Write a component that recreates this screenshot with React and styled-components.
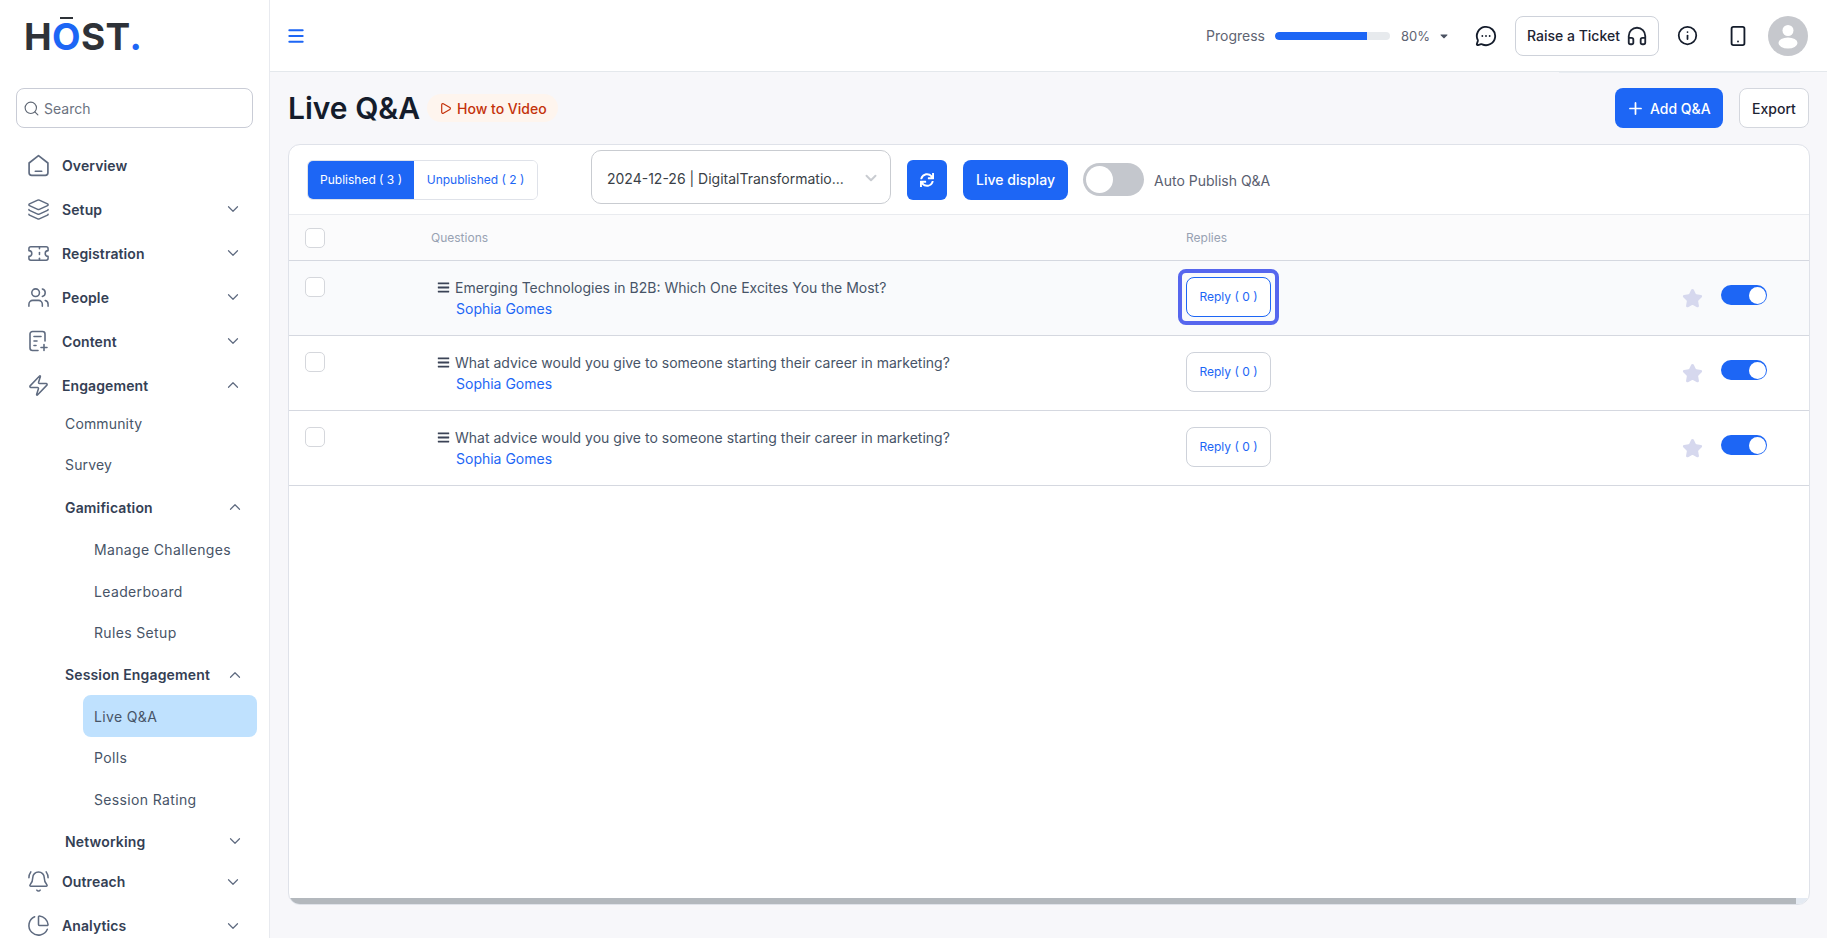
import React from "react"
import styled, { createGlobalStyle } from "styled-components"
import {
  Layers,
  Ticket,
  Users,
  Zap,
  BellRing,
  ChartPie,
  ChevronDown,
  ChevronUp,
  Search,
  Menu,
  MessageCircleMore,
  Headphones,
  Info,
  Smartphone,
  Plus,
  Play,
  Star,
} from "lucide-react"
import { FaSync, FaBars, FaCaretDown } from "react-icons/fa"

const GlobalStyle = createGlobalStyle`
  html, body {
    margin: 0;
    padding: 0;
    height: 938px;
    overflow: hidden;
    background: #f7f7fa;
    font-family: Inter, "Noto Sans", sans-serif;
  }
  * { box-sizing: border-box; }
`

const HomeIcon = () => (
  <svg width="23" height="23" viewBox="0 0 22 22" fill="none" stroke="currentColor" strokeWidth="1.6" strokeLinejoin="round" strokeLinecap="round">
    <path d="M2 8.6 11 1.5l9 7.1V18a2.5 2.5 0 0 1-2.5 2.5h-13A2.5 2.5 0 0 1 2 18V8.6Z" />
    <path d="M8 16.5h6" />
  </svg>
)

const ContentIcon = () => (
  <svg width="22" height="22" viewBox="0 0 22 22" fill="none" stroke="currentColor" strokeWidth="1.6" strokeLinecap="round" strokeLinejoin="round">
    <path d="M18 11V4a2.5 2.5 0 0 0-2.5-2.5h-10A2.5 2.5 0 0 0 3 4v14a2.5 2.5 0 0 0 2.5 2.5H11" />
    <path d="M7 6.5h7M7 11h3M7 15.5h2M17 14.5v6M14 17.5h6" />
  </svg>
)

const AvatarIcon = () => (
  <svg width="40" height="40" viewBox="0 0 40 40">
    <circle cx="20" cy="20" r="20" fill="#c6c8cd" />
    <circle cx="20" cy="14.5" r="5.5" fill="#fff" />
    <ellipse cx="20" cy="27" rx="9.5" ry="5.5" fill="#fff" />
  </svg>
)

const topItems = [
  { label: "Overview", icon: <HomeIcon /> },
  { label: "Setup", icon: <Layers size={23} strokeWidth={1.6} />, arrow: "down" },
  { label: "Registration", icon: <Ticket size={23} strokeWidth={1.6} />, arrow: "down" },
  { label: "People", icon: <Users size={23} strokeWidth={1.6} />, arrow: "down" },
  { label: "Content", icon: <ContentIcon />, arrow: "down" },
  { label: "Engagement", icon: <Zap size={23} strokeWidth={1.6} />, arrow: "up" },
]

const subItems = [
  { label: "Community", level: 1, height: 40 },
  { label: "Survey", level: 1, height: 42 },
  { label: "Gamification", level: 1, bold: true, arrow: "up", height: 43.1 },
  { label: "Manage Challenges", level: 2 },
  { label: "Leaderboard", level: 2 },
  { label: "Rules Setup", level: 2 },
  { label: "Session Engagement", level: 1, bold: true, arrow: "up" },
  { label: "Live Q&A", level: 2, active: true },
  { label: "Polls", level: 2 },
  { label: "Session Rating", level: 2 },
  { label: "Networking", level: 1, bold: true, arrow: "down" },
]

const bottomItems = [
  { label: "Outreach", icon: <BellRing size={23} strokeWidth={1.6} />, arrow: "down" },
  { label: "Analytics", icon: <ChartPie size={23} strokeWidth={1.6} />, arrow: "down" },
]

const questions = [
  { text: "Emerging Technologies in B2B: Which One Excites You the Most?", focused: true },
  { text: "What advice would you give to someone starting their career in marketing?" },
  { text: "What advice would you give to someone starting their career in marketing?" },
]

function Arrow({ dir }) {
  const Icon = dir === "up" ? ChevronUp : ChevronDown
  return (
    <ArrowSlot>
      <Icon size={18} strokeWidth={1.6} />
    </ArrowSlot>
  )
}

export default function App() {
  return (
    <>
      <GlobalStyle />
      <Page>
        <Sidebar>
          <Logo>
            H<LogoO>O</LogoO>ST<LogoDot>.</LogoDot>
          </Logo>
          <SearchBox>
            <Search size={17} strokeWidth={1.6} color="#5f6774" />
            <span>Search</span>
          </SearchBox>
          <Nav>
            {topItems.map((item) => (
              <TopItem key={item.label}>
                <IconSlot>{item.icon}</IconSlot>
                <TopLabel>{item.label}</TopLabel>
                {item.arrow && <Arrow dir={item.arrow} />}
              </TopItem>
            ))}
            <SubGroup>
              {subItems.map((item) => (
                <SubItem
                  key={item.label}
                  $level={item.level}
                  $bold={item.bold}
                  $active={item.active}
                  $height={item.height}
                >
                  <span>{item.label}</span>
                  {item.arrow && <Arrow dir={item.arrow} />}
                </SubItem>
              ))}
            </SubGroup>
            <BottomGroup>
              {bottomItems.map((item) => (
                <TopItem key={item.label}>
                  <IconSlot>{item.icon}</IconSlot>
                  <TopLabel>{item.label}</TopLabel>
                  <Arrow dir={item.arrow} />
                </TopItem>
              ))}
            </BottomGroup>
          </Nav>
        </Sidebar>

        <Main>
          <TopBar>
            <Menu size={20} strokeWidth={2.4} color="#1d66f5" />
            <TopRight>
              <ProgressLabel>Progress</ProgressLabel>
              <ProgressTrack>
                <ProgressFill style={{ width: "80%" }} />
              </ProgressTrack>
              <ProgressValue>80%</ProgressValue>
              <CaretSlot>
                <FaCaretDown size={12} />
              </CaretSlot>
              <MessageSlot>
                <MessageCircleMore size={22} strokeWidth={2} />
              </MessageSlot>
              <TicketButton>
                Raise a Ticket
                <Headphones size={22} strokeWidth={2} />
              </TicketButton>
              <InfoSlot>
                <Info size={21} strokeWidth={2} />
              </InfoSlot>
              <PhoneSlot>
                <Smartphone size={22} strokeWidth={2} />
              </PhoneSlot>
              <AvatarIcon />
            </TopRight>
          </TopBar>

          <Content>
            <Header>
              <Title>Live Q&amp;A</Title>
              <VideoPill>
                <Play size={13} strokeWidth={2.2} />
                How to Video
              </VideoPill>
              <HeaderActions>
                <AddButton>
                  <Plus size={19} strokeWidth={2.2} />
                  Add Q&amp;A
                </AddButton>
                <ExportButton>Export</ExportButton>
              </HeaderActions>
            </Header>

            <Card>
              <Toolbar>
                <Tabs>
                  <Tab $active>Published ( 3 )</Tab>
                  <Tab>Unpublished ( 2 )</Tab>
                </Tabs>
                <SelectBox>
                  <span>2024-12-26 | DigitalTransformatio...</span>
                  <ChevronDown size={18} strokeWidth={2.6} color="#c9ccd1" />
                </SelectBox>
                <RefreshButton>
                  <FaSync size={14} />
                </RefreshButton>
                <LiveButton>Live display</LiveButton>
                <AutoToggle>
                  <AutoKnob />
                </AutoToggle>
                <AutoLabel>Auto Publish Q&amp;A</AutoLabel>
              </Toolbar>

              <HeadRow>
                <Checkbox />
                <HeadCell>Questions</HeadCell>
                <HeadCell>Replies</HeadCell>
              </HeadRow>

              <Rows>
                {questions.map((q, i) => (
                  <Row key={i} $tinted={q.focused}>
                    <Checkbox />
                    <QuestionCell>
                      <QuestionLine>
                        <FaBars size={13} color="#3b4356" />
                        {q.text}
                      </QuestionLine>
                      <Author>Sophia Gomes</Author>
                    </QuestionCell>
                    <ReplyButton $focused={q.focused}>Reply ( 0 )</ReplyButton>
                    <StarSlot>
                      <Star size={21} fill="currentColor" strokeWidth={2} strokeLinejoin="round" />
                    </StarSlot>
                    <RowSwitch>
                      <RowKnob />
                    </RowSwitch>
                  </Row>
                ))}
              </Rows>

              <ScrollTrack>
                <ScrollThumb />
              </ScrollTrack>
            </Card>
          </Content>
        </Main>
      </Page>
    </>
  )
}

const Page = styled.div`
  display: flex;
  width: 1827px;
  height: 938px;
  overflow: hidden;
`

const Sidebar = styled.aside`
  width: 270px;
  flex: none;
  height: 938px;
  background: #fff;
  border-right: 1px solid #e8eaef;
  overflow: hidden;
`

const Logo = styled.div`
  height: 88px;
  padding: 14px 0 0 24px;
  font-size: 37px;
  line-height: 45px;
  font-weight: 700;
  color: #2e3238;
  letter-spacing: 0.4px;
`

const LogoO = styled.span`
  position: relative;
  color: #1d66f5;
  &::before {
    content: "";
    position: absolute;
    left: 8px;
    right: 8px;
    top: 3px;
    height: 2px;
    background: #2e3238;
  }
`

const LogoDot = styled.span`
  color: #1d66f5;
`

const SearchBox = styled.div`
  display: flex;
  align-items: center;
  gap: 4px;
  width: 237px;
  height: 40px;
  margin-left: 16px;
  padding-left: 6px;
  border: 1px solid #c9ccd6;
  border-radius: 8px;
  font-size: 14px;
  color: #6b7280;
`

const Nav = styled.nav`
  margin-top: 15px;
`

const TopItem = styled.div`
  display: flex;
  align-items: center;
  height: 44px;
  padding: 0 27px 0 26px;
  color: #5f6b80;
`

const IconSlot = styled.span`
  display: flex;
  align-items: center;
  justify-content: center;
  width: 24px;
  height: 24px;
  flex: none;
`

const TopLabel = styled.span`
  margin-left: 12px;
  font-size: 14px;
  font-weight: 600;
  letter-spacing: 0.1px;
  color: #344054;
`

const ArrowSlot = styled.span`
  display: flex;
  margin-left: auto;
  color: #5f6b80;
`

const SubGroup = styled.div`
  margin-top: -3.5px;
`

const SubItem = styled.div`
  display: flex;
  align-items: center;
  height: ${(p) => p.$height || 41.7}px;
  width: ${(p) => (p.$level === 2 ? "174px" : "179px")};
  margin-left: ${(p) => (p.$level === 2 ? "83px" : "65px")};
  padding-left: ${(p) => (p.$level === 2 ? "11px" : "0")};
  border-radius: 8px;
  font-size: 14px;
  font-weight: ${(p) => (p.$bold ? 600 : 400)};
  letter-spacing: ${(p) => (p.$level === 2 ? "0.35px" : "0.15px")};
  color: ${(p) => (p.$bold ? "#344054" : "#475467")};
  background: ${(p) => (p.$active ? "#bfe1fe" : "transparent")};
`

const BottomGroup = styled.div`
  margin-top: -2.2px;
`

const Main = styled.main`
  flex: 1;
  min-width: 0;
  display: flex;
  flex-direction: column;
`

const TopBar = styled.header`
  position: relative;
  display: flex;
  align-items: center;
  justify-content: space-between;
  height: 72px;
  padding: 0 19px 0 16px;
  background: #fff;
  border-bottom: 1px solid #e4e8ec;
  &::after {
    content: "";
    position: absolute;
    left: 1289px;
    width: 241px;
    bottom: -2px;
    height: 1px;
    background: #e9edf2;
  }
`

const TopRight = styled.div`
  display: flex;
  align-items: center;
  color: #141c2b;
`

const ProgressLabel = styled.span`
  font-size: 14px;
  color: #5e6472;
`

const ProgressTrack = styled.div`
  width: 115px;
  height: 8px;
  margin-left: 10px;
  border-radius: 4px;
  background: #e7eaed;
  overflow: hidden;
`

const ProgressFill = styled.div`
  height: 100%;
  background: #1d66f5;
  border-radius: 4px 0 0 4px;
`

const ProgressValue = styled.span`
  margin-left: 11px;
  font-size: 13px;
  color: #5e6472;
`

const CaretSlot = styled.span`
  display: flex;
  margin-left: 8px;
  color: #4b5262;
`

const MessageSlot = styled.span`
  display: flex;
  margin-left: 25px;
`

const TicketButton = styled.div`
  display: flex;
  align-items: center;
  justify-content: space-between;
  width: 144px;
  height: 40px;
  margin-left: 18px;
  padding: 0 10px 0 11px;
  border: 1px solid #ced2da;
  border-radius: 8px;
  font-size: 14px;
  font-weight: 500;
  color: #1d2433;
`

const InfoSlot = styled.span`
  display: flex;
  margin-left: 18px;
`

const PhoneSlot = styled.span`
  display: flex;
  margin-left: 29px;
  margin-right: 19px;
`

const Content = styled.div`
  flex: 1;
  min-height: 0;
  padding: 16px 17px 33px 18px;
  display: flex;
  flex-direction: column;
`

const Header = styled.div`
  display: flex;
  align-items: center;
  height: 40px;
  margin-bottom: 16px;
`

const Title = styled.h1`
  margin: 0;
  font-size: 30px;
  font-weight: 600;
  color: #141c2b;
`

const VideoPill = styled.div`
  display: flex;
  align-items: center;
  gap: 5px;
  height: 28px;
  margin-left: 7px;
  padding: 0 11px 0 12px;
  border-radius: 14px;
  background: #fef5ee;
  font-size: 14px;
  font-weight: 500;
  color: #c4320a;
`

const HeaderActions = styled.div`
  display: flex;
  gap: 16px;
  margin-left: auto;
  margin-right: 1px;
`

const AddButton = styled.div`
  display: flex;
  align-items: center;
  gap: 5px;
  width: 108px;
  height: 40px;
  padding-left: 11px;
  border-radius: 8px;
  background: #1d66f5;
  color: #fff;
  font-size: 14px;
  font-weight: 500;
`

const ExportButton = styled.div`
  display: flex;
  align-items: center;
  justify-content: center;
  width: 70px;
  height: 40px;
  background: #fff;
  border: 1px solid #d4d7de;
  border-radius: 8px;
  font-size: 14px;
  font-weight: 500;
  color: #1d2433;
`

const Card = styled.section`
  flex: 1;
  min-height: 0;
  display: flex;
  flex-direction: column;
  background: #fff;
  border: 1px solid #dfe2e9;
  border-radius: 12px;
  overflow: hidden;
`

const Toolbar = styled.div`
  display: flex;
  align-items: center;
  height: 70px;
  flex: none;
  padding-left: 18px;
  border-bottom: 1px solid #e9ebef;
`

const Tabs = styled.div`
  display: flex;
  width: 231px;
  height: 40px;
  border: 1px solid #dfe2e9;
  border-radius: 6px;
  overflow: hidden;
`

const Tab = styled.div`
  display: flex;
  align-items: center;
  justify-content: center;
  width: ${(p) => (p.$active ? "107px" : "124px")};
  font-size: 12px;
  background: ${(p) => (p.$active ? "#1d66f5" : "#fff")};
  color: ${(p) => (p.$active ? "#fff" : "#1d66f5")};
`

const SelectBox = styled.div`
  display: flex;
  align-items: center;
  justify-content: space-between;
  width: 300px;
  height: 54px;
  margin: 0 0 5px 53px;
  padding: 2px 10px 0 15px;
  border: 1px solid #c9ccd1;
  border-radius: 10px;
  font-size: 14px;
  color: #3a3f47;
`

const RefreshButton = styled.div`
  display: flex;
  align-items: center;
  justify-content: center;
  width: 40px;
  height: 40px;
  margin-left: 16px;
  border-radius: 6px;
  background: #1d66f5;
  color: #fff;
`

const LiveButton = styled.div`
  display: flex;
  align-items: center;
  justify-content: center;
  width: 105px;
  height: 40px;
  margin-left: 16px;
  border-radius: 8px;
  background: #1d66f5;
  color: #fff;
  font-size: 14px;
  font-weight: 500;
`

const AutoToggle = styled.div`
  display: flex;
  align-items: center;
  width: 61px;
  height: 33px;
  margin-left: 15px;
  padding-left: 3px;
  border-radius: 17px;
  background: #c4c7cd;
`

const AutoKnob = styled.div`
  width: 27px;
  height: 27px;
  border-radius: 50%;
  background: #fff;
`

const AutoLabel = styled.span`
  margin-left: 10px;
  padding-top: 2px;
  font-size: 14px;
  color: #5a6070;
`

const HeadRow = styled.div`
  display: grid;
  grid-template-columns: 126px 755px 1fr;
  align-items: center;
  height: 46px;
  flex: none;
  padding-left: 16px;
  background: #fbfbfc;
  border-bottom: 1px solid #d5d8e0;
`

const HeadCell = styled.span`
  font-size: 12px;
  color: #98a2b3;
`

const Checkbox = styled.div`
  width: 20px;
  height: 20px;
  border: 1px solid #d5d7dc;
  border-radius: 5px;
  background: #fff;
`

const Rows = styled.div`
  flex: 1;
  min-height: 0;
`

const Row = styled.div`
  display: grid;
  grid-template-columns: 126px 755px 85px 450px 46px;
  align-items: start;
  height: 75px;
  padding: 16px 0 0 16px;
  background: ${(p) => (p.$tinted ? "#f9fafc" : "#fff")};
  border-bottom: 1px solid #d5d8e0;
`

const QuestionCell = styled.div`
  padding-left: 6px;
`

const QuestionLine = styled.div`
  display: flex;
  align-items: center;
  gap: 5px;
  height: 20px;
  font-size: 14px;
  color: #475467;
`

const Author = styled.div`
  margin: 2px 0 0 19px;
  font-size: 14px;
  line-height: 20px;
  color: #1d66f5;
`

const ReplyButton = styled.div`
  position: relative;
  display: flex;
  align-items: center;
  justify-content: center;
  height: 40px;
  padding-bottom: 1px;
  border: 1px solid ${(p) => (p.$focused ? "#1d66f5" : "#ced2da")};
  border-radius: 8px;
  background: #fff;
  font-size: 12px;
  color: #1d66f5;
  ${(p) =>
    p.$focused &&
    `&::after {
      content: "";
      position: absolute;
      inset: -9px;
      border: 4px solid #5666ee;
      border-radius: 8px;
    }`}
`

const StarSlot = styled.div`
  display: flex;
  justify-content: flex-end;
  padding: 11px 18px 0 0;
  color: #d6d8ee;
`

const RowSwitch = styled.div`
  display: flex;
  align-items: center;
  justify-content: flex-end;
  width: 46px;
  height: 20px;
  margin-top: 8px;
  padding-right: 1px;
  border-radius: 10px;
  background: #1d66f5;
`

const RowKnob = styled.div`
  width: 17px;
  height: 17px;
  border-radius: 50%;
  background: #fff;
`

const ScrollTrack = styled.div`
  height: 6px;
  flex: none;
  background: #e4eaf2;
`

const ScrollThumb = styled.div`
  width: 1507px;
  height: 100%;
  background: #b3b8bd;
`
